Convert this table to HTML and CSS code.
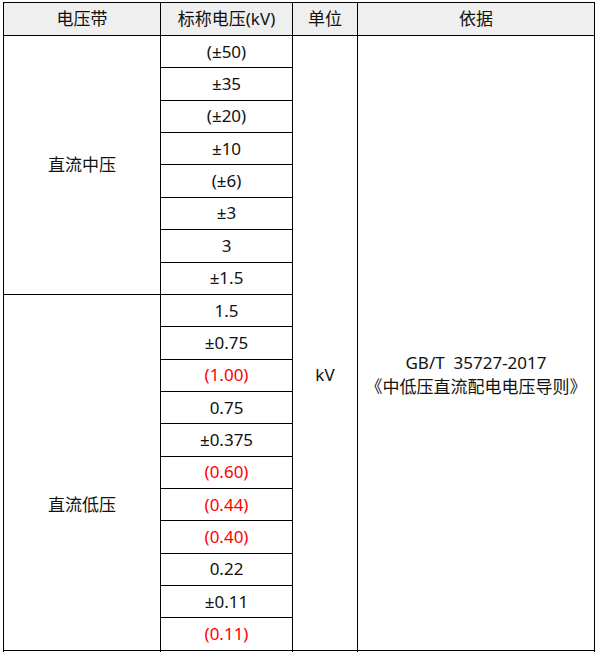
FILE: index.html
```html
<!DOCTYPE html>
<html lang="zh-CN">
<head>
<meta charset="utf-8">
<title>电压带</title>
<link rel="stylesheet" href="styles.css">
</head>
<body>
<table class="volt">
  <colgroup>
    <col class="c1"><col class="c2"><col class="c3"><col class="c4">
  </colgroup>
  <thead>
    <tr><th>电压带</th><th>标称电压(kV)</th><th>单位</th><th>依据</th></tr>
  </thead>
  <tbody>
    <tr><td rowspan="8">直流中压</td><td>(±50)</td><td rowspan="19" class="unit">kV</td><td rowspan="19" class="basis">GB/T&nbsp;&nbsp;35727-2017<br>《中低压直流配电电压导则》</td></tr>
    <tr><td>±35</td></tr>
    <tr><td>(±20)</td></tr>
    <tr><td>±10</td></tr>
    <tr><td>(±6)</td></tr>
    <tr><td>±3</td></tr>
    <tr><td>3</td></tr>
    <tr><td>±1.5</td></tr>
    <tr><td rowspan="11" class="low">直流低压</td><td>1.5</td></tr>
    <tr><td>±0.75</td></tr>
    <tr><td class="red">(1.00)</td></tr>
    <tr><td>0.75</td></tr>
    <tr><td>±0.375</td></tr>
    <tr><td class="red">(0.60)</td></tr>
    <tr><td class="red">(0.44)</td></tr>
    <tr><td class="red">(0.40)</td></tr>
    <tr><td>0.22</td></tr>
    <tr><td>±0.11</td></tr>
    <tr><td class="red">(0.11)</td></tr>
  </tbody>
</table>
<table class="volt cont">
  <colgroup>
    <col class="c1"><col class="c2"><col class="c3"><col class="c4">
  </colgroup>
  <tbody>
    <tr><td></td><td></td><td></td><td></td></tr>
  </tbody>
</table>
</body>
</html>
```
FILE: styles.css
```css
html, body {
  margin: 0;
  padding: 0;
  background: #ffffff;
}

.volt {
  border-collapse: collapse;
  table-layout: fixed;
  width: 591px;
  margin-left: 3px;
  font-family: "Noto Sans", "Noto Sans CJK SC", sans-serif;
  font-size: 17px;
  color: #111111;
}

.volt:first-child {
  margin-top: 2px;
}

.c1 { width: 157px; }
.c2 { width: 132px; }
.c3 { width: 65px; }
.c4 { width: 237px; }

.volt th,
.volt td {
  border: 1px solid #000;
  text-align: center;
  vertical-align: middle;
  padding: 0;
  font-weight: normal;
  line-height: 24px;
}

.volt th {
  background: #efefef;
  height: 32px;
}

.volt tbody tr {
  height: 32.37px;
}

.volt .red {
  color: #ff0000;
}

.volt .low {
  padding-top: 65px;
}

.volt .unit,
.volt .basis {
  padding-top: 65px;
}

.cont td {
  border-top: none;
  border-bottom: none;
}
```
